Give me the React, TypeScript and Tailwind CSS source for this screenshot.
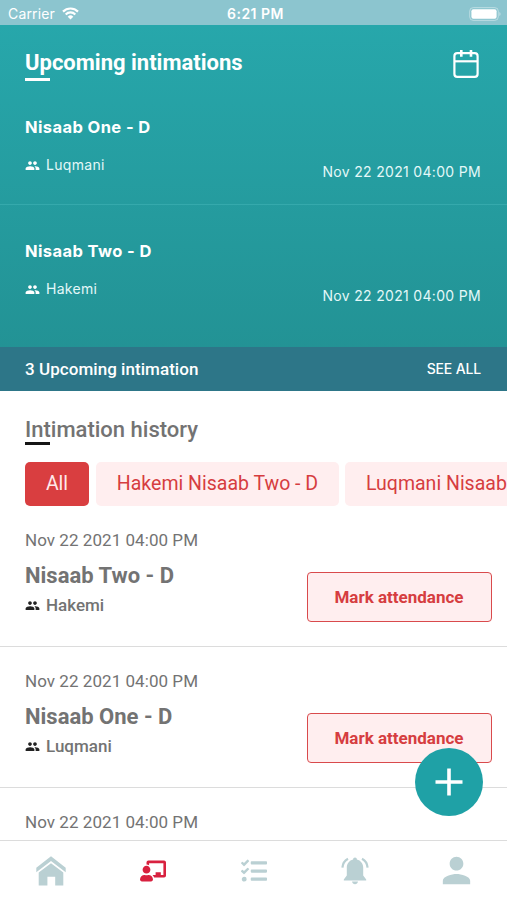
import { FaChalkboardTeacher, FaTasks } from 'react-icons/fa';
import { MdGroup, MdPerson } from 'react-icons/md';

interface Intimation {
	id: number;
	title: string;
	group: string;
	date: string;
}

const UPCOMING: Intimation[] = [
	{ id: 1, title: 'Nisaab One - D', group: 'Luqmani', date: 'Nov 22 2021 04:00 PM' },
	{ id: 2, title: 'Nisaab Two - D', group: 'Hakemi', date: 'Nov 22 2021 04:00 PM' }
];

const HISTORY: Intimation[] = [
	{ id: 3, title: 'Nisaab Two - D', group: 'Hakemi', date: 'Nov 22 2021 04:00 PM' },
	{ id: 4, title: 'Nisaab One - D', group: 'Luqmani', date: 'Nov 22 2021 04:00 PM' },
	{ id: 5, title: 'Nisaab One - D', group: 'Hakemi', date: 'Nov 22 2021 04:00 PM' }
];

function StatusBar() {
	return (
		<div className="grid h-[25px] shrink-0 grid-cols-3 items-center bg-[#8cc5cf] pt-[2px] pr-[6px] pl-2 font-['Inter',sans-serif] text-white">
			<div className="flex items-center gap-[7px]">
				<span className="text-[14px] leading-5 tracking-[0.15px]">Carrier</span>
				<svg className="h-[13px] w-[17px]" viewBox="0 0 17 13" fill="none" stroke="currentColor">
					<path d="M1 4.6a10.6 10.6 0 0 1 15 0" strokeWidth="2.2" />
					<path d="M3.7 7.4a6.8 6.8 0 0 1 9.6 0" strokeWidth="2.1" />
					<path d="M8.5 12.6 5.7 9.7a4 4 0 0 1 5.6 0z" fill="currentColor" stroke="none" />
				</svg>
			</div>
			<span className="pl-[2px] text-center text-[14px] leading-5 font-semibold tracking-[0.5px] whitespace-nowrap">
				6:21 PM
			</span>
			<svg className="h-[14px] w-[32px] justify-self-end" viewBox="0 0 32 14" fill="none">
				<rect x="0.7" y="0.6" width="28.6" height="12.8" rx="3.6" stroke="#fff" strokeOpacity="0.4" />
				<rect x="2.4" y="2.3" width="25.2" height="9.4" rx="2" fill="#fff" />
				<path d="M30.4 5v4c1.5-.6 1.5-3.4 0-4z" fill="#fff" fillOpacity="0.5" />
			</svg>
		</div>
	);
}

function CalendarIcon() {
	return (
		<svg className="h-[30px] w-[28px]" viewBox="0 0 28 30" fill="none" stroke="currentColor" strokeWidth="2.2">
			<rect x="2.4" y="4.2" width="23.2" height="23.6" rx="2.8" />
			<path d="M2.4 12.3h23.2" />
			<path d="M9.3 1v6.8M19 1v6.8" strokeWidth="2.6" />
		</svg>
	);
}

function UpcomingItem({ item }: { item: Intimation }) {
	return (
		<li className="flex h-[124px] items-start justify-between border-b border-[#35a9ac] pr-[26px] pl-[25px] last:border-transparent">
			<div className="flex flex-col gap-[18px] pt-[36px]">
				<h2 className="text-[16.5px] leading-5 font-bold tracking-[0.4px]">{item.title}</h2>
				<p className="flex items-center gap-[6px] text-[14px] leading-5 tracking-[0.3px] text-[#e4f8f8]">
					<MdGroup className="size-[15px] text-white" />
					{item.group}
				</p>
			</div>
			<time className="pt-[80px] text-[14px] leading-[21px] tracking-[0.32px] text-[#e4f8f8]">{item.date}</time>
		</li>
	);
}

function UpcomingSection() {
	return (
		<section className="flex h-[366px] shrink-0 flex-col bg-linear-to-b from-[#27a7ab] to-[#229092] text-white">
			<div className="flex h-[56px] items-start justify-between pr-[27px] pl-[25px]">
				<div className="pt-[24px]">
					<h1 className="font-['Roboto',sans-serif] text-[22px] leading-7 font-bold">Upcoming intimations</h1>
					<div className="mt-[1px] h-[3px] w-[25px] bg-white" />
				</div>
				<div className="pt-[24px]">
					<CalendarIcon />
				</div>
			</div>
			<ul className="flex-1 font-['Inter',sans-serif]">
				{UPCOMING.map((item) => (
					<UpcomingItem key={item.id} item={item} />
				))}
			</ul>
			<div className="flex h-[44px] items-center justify-between bg-[#2d7688] pr-[26px] pl-[25px] font-medium">
				<span className="pt-px font-['Roboto',sans-serif] text-[17px] tracking-[0.05px]">3 Upcoming intimation</span>
				<button className="pb-px font-['Inter',sans-serif] text-[14px] tracking-[-0.15px]">SEE ALL</button>
			</div>
		</section>
	);
}

function Filters() {
	return (
		<div className="mt-[17px] flex shrink-0 gap-[7px] overflow-hidden pl-[25px] text-[19.5px] leading-[44px] whitespace-nowrap text-[#d63d40]">
			<button className="w-[64px] shrink-0 rounded-[5px] bg-[#d93e40] text-[#ffe9ea]">All</button>
			<button className="w-[243px] shrink-0 rounded-[5px] bg-[#ffeeef]">Hakemi Nisaab Two - D</button>
			<button className="-ml-px shrink-0 rounded-[5px] bg-[#ffeeef] px-[21px]">Luqmani Nisaab One - D</button>
		</div>
	);
}

function HistoryItem({ item }: { item: Intimation }) {
	return (
		<li className="flex h-[141px] shrink-0 items-start justify-between border-b border-[#dcdcdc] pr-[15px] pl-[25px] text-[#737373]">
			<div className="pt-[24px]">
				<time className="block text-[17px] leading-5 tracking-[0.05px]">{item.date}</time>
				<h3 className="mt-[14px] text-[22px] leading-6 font-bold">{item.title}</h3>
				<p className="mt-[7px] flex items-center gap-[6px] text-[17px] leading-5 font-medium">
					<MdGroup className="size-[15px] text-[#222]" />
					{item.group}
				</p>
			</div>
			<button className="mt-[66px] h-[50px] w-[185px] rounded-[4px] border border-[#d94a4c] bg-[#ffeeef] pt-px pr-px text-[17px] font-bold text-[#d63d40]">
				Mark attendance
			</button>
		</li>
	);
}

function HistorySection() {
	return (
		<section className="flex min-h-0 flex-1 flex-col overflow-hidden font-['Roboto',sans-serif]">
			<div className="shrink-0 pt-[26px] pl-[25px]">
				<h2 className="text-[22px] leading-[26px] font-medium text-[#737373]">Intimation history</h2>
				<div className="-mt-px h-[3px] w-[25px] bg-[#151515]" />
			</div>
			<Filters />
			<ul className="flex flex-col">
				{HISTORY.map((item) => (
					<HistoryItem key={item.id} item={item} />
				))}
			</ul>
		</section>
	);
}

function HomeIcon() {
	return (
		<svg className="h-[30px] w-[30px]" viewBox="0 0 30 30" fill="currentColor">
			<path d="M15 .2 29.7 11.8v4.4L15 5 .3 16.200v-4.400z" />
			<path d="M2.700 16.600 15 7.200l12.300 9.400v12.800h-8.100v-8.600h-7.800v8.600H2.700z" />
		</svg>
	);
}

function BellIcon() {
	return (
		<svg className="h-[28px] w-[28px]" viewBox="0 0 28 28" fill="currentColor">
			<path d="M14 .5c1.200 0 1.900.8 1.900 1.900 3.800 1 6.300 4 6.300 8v8.200l3 3.900v.9H2.800v-.9l3-3.900v-8.200c0-4 2.500-7 6.300-8C12.100 1.300 12.800.5 14 .5z" />
			<path d="M11 24.500h6c-.4 1.700-1.500 2.700-3 2.700s-2.600-1-3-2.700z" />
			<path d="M7 1.700C3.500 3.500 1.700 6.600 1.400 10.700M21 1.700c3.500 1.800 5.300 4.900 5.600 9" fill="none" stroke="currentColor" strokeWidth="2.200" />
		</svg>
	);
}

function TabBar() {
	return (
		<nav className="grid h-[60px] shrink-0 grid-cols-5 place-items-center border-t border-[#dcdcdc] bg-white text-[#bad0d3]">
			<HomeIcon />
			<FaChalkboardTeacher className="ml-[2px] size-[26px] text-[#d8213f]" />
			<FaTasks className="ml-px size-[26px]" />
			<BellIcon />
			<MdPerson className="size-[41px]" />
		</nav>
	);
}

export default function App() {
	return (
		<div className="relative flex h-[900px] w-[507px] flex-col overflow-hidden bg-white">
			<StatusBar />
			<UpcomingSection />
			<HistorySection />
			<TabBar />
			<button className="absolute right-[24px] bottom-[84px] grid size-[68px] place-items-center rounded-full bg-[#1fa1a6] text-white">
				<svg className="size-[28px]" viewBox="0 0 28 28" stroke="currentColor" strokeWidth="3.6">
					<path d="M14 .5v27M.5 14h27" />
				</svg>
			</button>
		</div>
	);
}
